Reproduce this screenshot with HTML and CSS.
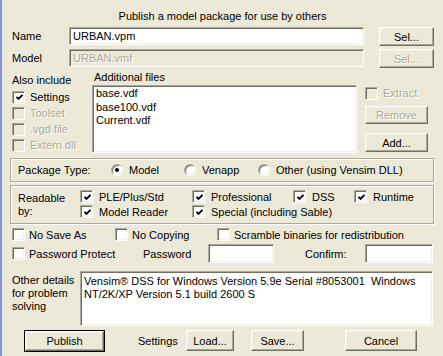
FILE: index.html
```html
<!DOCTYPE html>
<html>
<head>
<meta charset="utf-8">
<link rel="stylesheet" href="styles.css">
</head>
<body>
<div class="dlg">
  <div class="title">Publish a model package for use by others</div>

  <div class="frow r-name">
    <span class="lbl">Name</span>
    <div class="field f-name">URBAN.vpm</div>
    <div class="btn b-sel">Sel...</div>
  </div>
  <div class="frow r-model">
    <span class="lbl">Model</span>
    <div class="field f-name dis">URBAN.vmf</div>
    <div class="btn b-sel dis">Sel...</div>
  </div>

  <div class="include">
    <div class="inc-left">
      <div class="inc-title">Also include</div>
      <div class="ck"><span class="cb"><svg viewBox="0 0 9 9" width="9" height="9"><polyline points="1.5,3.8 3.5,5.8 7.5,1.8" fill="none" stroke="#000" stroke-width="1.9"/></svg></span>Settings</div>
      <div class="ck dis"><span class="cb"></span>Toolset</div>
      <div class="ck dis"><span class="cb"></span>.vgd file</div>
      <div class="ck dis"><span class="cb"></span>Extern dll</div>
    </div>
    <div class="inc-mid">
      <div class="mid-title">Additional files</div>
      <div class="field list">
        <div>base.vdf</div>
        <div>base100.vdf</div>
        <div>Current.vdf</div>
      </div>
    </div>
    <div class="inc-right">
      <div class="ck dis extract"><span class="cb"></span>Extract</div>
      <div class="btn b-side b-remove dis">Remove</div>
      <div class="btn b-side b-add">Add...</div>
    </div>
  </div>

  <div class="group g-type">
    <span class="gt-lbl">Package Type:</span>
    <span class="opt o-model"><span class="rd on"></span>Model</span>
    <span class="opt o-venapp"><span class="rd"></span>Venapp</span>
    <span class="opt o-other"><span class="rd"></span>Other (using Vensim DLL)</span>
  </div>

  <div class="group g-read">
    <div class="rd-lbl">Readable<br>by:</div>
    <div class="rd-grid">
      <div class="ck rck"><span class="cb"><svg viewBox="0 0 9 9" width="9" height="9"><polyline points="1.5,3.8 3.5,5.8 7.5,1.8" fill="none" stroke="#000" stroke-width="1.9"/></svg></span>PLE/Plus/Std</div>
      <div class="ck rck"><span class="cb"><svg viewBox="0 0 9 9" width="9" height="9"><polyline points="1.5,3.8 3.5,5.8 7.5,1.8" fill="none" stroke="#000" stroke-width="1.9"/></svg></span>Professional</div>
      <div class="ck rck"><span class="cb"><svg viewBox="0 0 9 9" width="9" height="9"><polyline points="1.5,3.8 3.5,5.8 7.5,1.8" fill="none" stroke="#000" stroke-width="1.9"/></svg></span>DSS</div>
      <div class="ck rck"><span class="cb"><svg viewBox="0 0 9 9" width="9" height="9"><polyline points="1.5,3.8 3.5,5.8 7.5,1.8" fill="none" stroke="#000" stroke-width="1.9"/></svg></span>Runtime</div>
      <div class="ck rck"><span class="cb"><svg viewBox="0 0 9 9" width="9" height="9"><polyline points="1.5,3.8 3.5,5.8 7.5,1.8" fill="none" stroke="#000" stroke-width="1.9"/></svg></span>Model Reader</div>
      <div class="ck rck span3"><span class="cb"><svg viewBox="0 0 9 9" width="9" height="9"><polyline points="1.5,3.8 3.5,5.8 7.5,1.8" fill="none" stroke="#000" stroke-width="1.9"/></svg></span>Special (including Sable)</div>
    </div>
  </div>

  <div class="orow">
    <div class="ck oc c1"><span class="cb"></span>No Save As</div>
    <div class="ck oc c2"><span class="cb"></span>No Copying</div>
    <div class="ck oc c3"><span class="cb"></span>Scramble binaries for redistribution</div>
  </div>

  <div class="prow">
    <div class="ck oc p1"><span class="cb"></span>Password Protect</div>
    <span class="plbl">Password</span>
    <div class="field f-pw"></div>
    <span class="clbl">Confirm:</span>
    <div class="field f-cf"></div>
  </div>

  <div class="drow">
    <div class="dlbl">Other details<br>for problem<br>solving</div>
    <div class="field f-det">Vensim® DSS for Windows Version 5.9e Serial #8053001&nbsp; Windows NT/2K/XP Version 5.1 build 2600 S</div>
  </div>

  <div class="brow">
    <div class="btn def b-pub">Publish</div>
    <span class="slbl">Settings</span>
    <div class="btn b-load">Load...</div>
    <div class="btn b-save">Save...</div>
    <div class="btn b-cancel">Cancel</div>
  </div>
</div>
</body>
</html>
```

FILE: styles.css
```css
html, body {
  margin: 0;
  padding: 0;
  background: #ECE9D8;
}
body {
  font: 11px "Liberation Sans", Arial, sans-serif;
  color: #000;
}
.dlg {
  box-sizing: border-box;
  width: 443px;
  height: 356px;
  border-left: 2px solid #7C98DE;
  background: #ECE9D8;
  padding: 10px 0 0 10px;
  overflow: hidden;
}
.title {
  height: 13px;
  line-height: 13px;
  text-align: center;
  margin-left: -10px;
}

/* 3D primitives */
.field {
  box-sizing: border-box;
  background: #fff;
  border: 1px solid;
  border-color: #ACA899 #fff #fff #ACA899;
  box-shadow: inset 1px 1px 0 #716F64, inset -1px -1px 0 #F1EFE2;
}
.field.dis {
  background: #ECE9D8;
  color: #ACA899;
  text-shadow: 1px 1px 0 #fff;
}
.btn {
  box-sizing: border-box;
  display: flex;
  align-items: center;
  justify-content: center;
  background: #ECE9D8;
  border: 1px solid;
  border-color: #fff #716F64 #716F64 #fff;
  box-shadow: inset -1px -1px 0 #ACA899, inset 1px 1px 0 #F1EFE2;
}
.btn.dis {
  color: #ACA899;
  text-shadow: 1px 1px 0 #fff;
}
.btn.def {
  outline: 1px solid #000;
}
.cb {
  box-sizing: border-box;
  flex: none;
  width: 13px;
  height: 13px;
  background: #fff;
  border: 1px solid;
  border-color: #ACA899 #fff #fff #ACA899;
  box-shadow: inset 1px 1px 0 #716F64, inset -1px -1px 0 #F1EFE2;
  display: flex;
  align-items: center;
  justify-content: center;
  padding: 1px 0 0 1px;
}
.cb svg { display: block; }
.ck {
  display: flex;
  align-items: center;
  white-space: nowrap;
}
.ck .cb { margin-right: 5px; }
.ck.dis { color: #ACA899; text-shadow: 1px 1px 0 #fff; }
.ck.dis .cb { background: #ECE9D8; }

.rd {
  box-sizing: border-box;
  display: inline-block;
  position: relative;
  width: 12px;
  height: 12px;
  border-radius: 50%;
  background: #fff;
  border: 1px solid;
  border-color: #ACA899 #fff #fff #ACA899;
  box-shadow: inset 1px 1px 0 #716F64, inset -1px -1px 0 #F1EFE2;
  margin-right: 6px;
  flex: none;
}
.rd.on::after {
  content: "";
  position: absolute;
  left: 3px;
  top: 3px;
  width: 4px;
  height: 4px;
  border-radius: 50%;
  background: #000;
}

.group {
  box-sizing: border-box;
  margin-left: -2px;
  width: 424px;
  border: 1px solid #ACA899;
  box-shadow: inset 1px 1px 0 #fff, 1px 1px 0 #fff;
}

/* rows */
.frow {
  display: flex;
  align-items: flex-start;
  height: 19px;
}
.r-name { margin-top: 4px; }
.r-model { margin-top: 3px; }
.lbl {
  width: 57px;
  line-height: 18px;
}
.f-name {
  width: 295px;
  height: 18px;
  line-height: 14px;
  padding: 1px 3px;
}
.b-sel {
  margin-left: 15px;
  width: 55px;
  height: 19px;
}

.include {
  display: flex;
  margin-top: 3px;
  height: 82px;
}
.inc-left {
  width: 80px;
  padding-top: 3px;
}
.inc-title { line-height: 13px; margin-bottom: 2px; }
.inc-left .ck { height: 16px; }
.inc-left .ck .cb { margin-right: 5px; }
.inc-mid { width: 265px; }
.mid-title { line-height: 13px; padding-left: 2px; }
.list {
  margin-top: 1px;
  height: 68px;
  padding: 1px 3px;
  line-height: 13.5px;
}
.inc-right {
  margin-left: 8px;
  width: 64px;
}
.extract { margin-top: 15px; height: 14px; }
.b-side { width: 63px; }
.b-remove { margin-top: 6px; height: 18px; }
.b-add { margin-top: 9px; height: 19px; }

.g-type {
  margin-top: 5px;
  height: 24px;
  display: flex;
  align-items: center;
  padding-left: 7px;
}
.gt-lbl { width: 93px; }
.opt { display: flex; align-items: center; }
.o-model { width: 73px; }
.o-venapp { width: 74px; }

.g-read {
  margin-top: 3px;
  height: 39px;
  display: flex;
  padding-left: 7px;
}
.rd-lbl {
  width: 62px;
  line-height: 13px;
  padding-top: 6px;
}
.rd-grid {
  display: grid;
  grid-template-columns: 112px 101px 61px auto;
  grid-auto-rows: 15px;
  padding-top: 3px;
}
.rck .cb { margin-right: 6px; }
.span3 { grid-column: span 3; }

.orow {
  display: flex;
  margin-top: 3px;
  height: 15px;
}
.oc .cb { margin-right: 4px; }
.c1 { width: 103px; }
.c2 { width: 102px; }

.prow {
  display: flex;
  align-items: center;
  margin-top: 2px;
  height: 19px;
}
.p1 { width: 131px; }
.plbl { width: 65px; }
.f-pw { width: 66px; height: 19px; }
.clbl { margin-left: 31px; width: 60px; }
.f-cf { width: 68px; height: 19px; }

.drow {
  display: flex;
  margin-top: 8px;
  height: 55px;
}
.dlbl {
  width: 68px;
  line-height: 13px;
  padding-top: 3px;
}
.f-det {
  width: 353px;
  height: 55px;
  padding: 3px 3px;
  line-height: 13px;
}

.brow {
  display: flex;
  align-items: center;
  margin-top: 4px;
  height: 21px;
}
.b-pub { margin-left: 13px; width: 79px; height: 20px; }
.slbl { margin-left: 34px; width: 48px; }
.b-load { width: 48px; height: 21px; }
.b-save { margin-left: 17px; width: 53px; height: 21px; }
.b-cancel { margin-left: 41px; width: 72px; height: 21px; }
```
